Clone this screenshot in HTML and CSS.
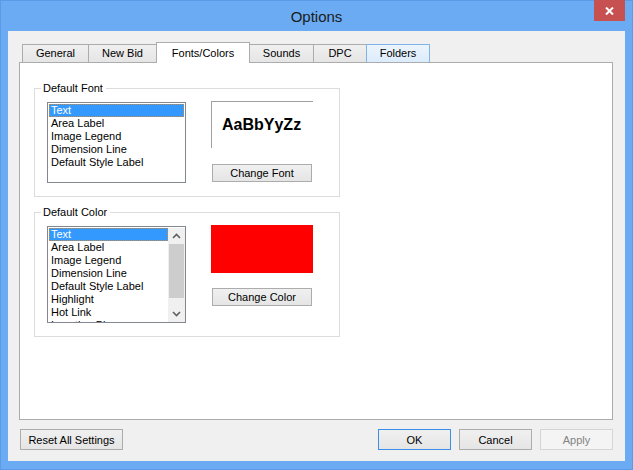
FILE: index.html
```html
<!DOCTYPE html>
<html>
<head>
<meta charset="utf-8">
<title>Options</title>
<link rel="stylesheet" href="styles.css">
</head>
<body>
<div class="window">
  <div class="titlebar">
    <span class="title">Options</span>
    <div class="close">
      <svg width="9" height="8" viewBox="0 0 9 8"><path d="M1 0.5 L8 7.5 M8 0.5 L1 7.5" stroke="#fff" stroke-width="2"/></svg>
    </div>
  </div>
  <div class="client">
    <div class="tabs">
      <div class="tab t-general">General</div>
      <div class="tab t-newbid">New Bid</div>
      <div class="tab t-fonts selected">Fonts/Colors</div>
      <div class="tab t-sounds">Sounds</div>
      <div class="tab t-dpc">DPC</div>
      <div class="tab t-folders hover">Folders</div>
    </div>
    <div class="panel">
      <div class="group group-font">
        <span class="legend">Default Font</span>
        <div class="listbox lb-font">
          <div class="items">
            <div class="item sel">Text</div>
            <div class="item">Area Label</div>
            <div class="item">Image Legend</div>
            <div class="item">Dimension Line</div>
            <div class="item">Default Style Label</div>
          </div>
        </div>
        <div class="side">
          <div class="preview">AaBbYyZz</div>
          <button class="btn side-btn btn-font">Change Font</button>
        </div>
      </div>
      <div class="group group-color">
        <span class="legend">Default Color</span>
        <div class="listbox lb-color">
          <div class="items">
            <div class="item sel">Text</div>
            <div class="item">Area Label</div>
            <div class="item">Image Legend</div>
            <div class="item">Dimension Line</div>
            <div class="item">Default Style Label</div>
            <div class="item">Highlight</div>
            <div class="item">Hot Link</div>
            <div class="item">Location Pin</div>
          </div>
          <div class="scrollbar">
            <div class="arrow">
              <svg width="9" height="6" viewBox="0 0 9 6"><path d="M1 5 L4.5 1.5 L8 5" fill="none" stroke="#606060" stroke-width="1.6"/></svg>
            </div>
            <div class="track"><div class="thumb"></div></div>
            <div class="arrow">
              <svg width="9" height="6" viewBox="0 0 9 6"><path d="M1 1 L4.5 4.5 L8 1" fill="none" stroke="#606060" stroke-width="1.6"/></svg>
            </div>
          </div>
        </div>
        <div class="side">
          <div class="swatch"></div>
          <button class="btn side-btn btn-color">Change Color</button>
        </div>
      </div>
    </div>
    <div class="footer">
      <button class="btn btn-reset">Reset All Settings</button>
      <div class="footer-right">
        <button class="btn btn-dlg btn-default">OK</button>
        <button class="btn btn-dlg">Cancel</button>
        <button class="btn btn-dlg btn-disabled">Apply</button>
      </div>
    </div>
  </div>
</div>
</body>
</html>
```
FILE: styles.css
```css
html, body {
  margin: 0;
  padding: 0;
}
body {
  font-family: "Liberation Sans", Arial, sans-serif;
  font-size: 11px;
  color: #000;
}
.window {
  width: 633px;
  height: 470px;
  box-sizing: border-box;
  background: #6aabf3;
  border: 1px solid #5a9ae6;
  display: flex;
  flex-direction: column;
}
.titlebar {
  height: 30px;
  position: relative;
  display: flex;
  justify-content: center;
  align-items: center;
}
.title {
  font-family: "Liberation Sans", Arial, sans-serif;
  font-size: 15px;
  color: #1b1b1b;
}
.close {
  position: absolute;
  top: -1px;
  right: 7px;
  width: 31px;
  height: 21px;
  background: #c75050;
  display: flex;
  justify-content: center;
  align-items: center;
}
.client {
  margin: 0 7px;
  height: 430px;
  box-sizing: border-box;
  background: #f0f0f0;
  padding: 11px 12px 0 11px;
}
.tabs {
  height: 20px;
  display: flex;
  align-items: flex-end;
  padding-left: 3px;
  position: relative;
  z-index: 1;
}
.tab {
  height: 18px;
  box-sizing: border-box;
  border: 1px solid #acacac;
  border-bottom: none;
  background: linear-gradient(#f0f0f0, #e5e5e5);
  text-align: center;
  line-height: 17px;
  margin-left: -1px;
}
.tab:first-child {
  margin-left: 0;
}
.tab.selected {
  height: 21px;
  margin-bottom: -1px;
  background: #fff;
  position: relative;
  z-index: 2;
  line-height: 20px;
}
.tab.hover {
  background: linear-gradient(#ecf4fc, #dcecfc);
  border-color: #7eb4ea;
  position: relative;
  z-index: 1;
}
.t-general { width: 67px; }
.t-newbid { width: 69px; }
.t-fonts { width: 94px; }
.t-sounds { width: 65px; }
.t-dpc { width: 54px; }
.t-folders { width: 64px; }

.panel {
  height: 358px;
  box-sizing: border-box;
  background: #fff;
  border: 1px solid #acacac;
  padding: 25px 0 0 14px;
}
.group {
  width: 306px;
  box-sizing: border-box;
  border: 1px solid #dcdcdc;
  position: relative;
  display: flex;
  align-items: flex-start;
  gap: 25px;
  padding: 12px 0 0 12px;
}
.group-font {
  height: 109px;
}
.group-color {
  height: 125px;
  margin-top: 15px;
}
.legend {
  position: absolute;
  left: 6px;
  top: -7px;
  background: #fff;
  padding: 0 3px 0 2px;
  line-height: 13px;
  color: #000;
}
.listbox {
  width: 139px;
  box-sizing: border-box;
  border: 1px solid #828790;
  background: #fff;
  padding: 1px;
  display: flex;
  overflow: hidden;
}
.lb-font {
  height: 81px;
  margin-top: 1px;
}
.lb-color {
  height: 97px;
  margin-top: 1px;
  padding-right: 0;
  padding-bottom: 0;
}
.items {
  flex: 1;
  overflow: hidden;
}
.item {
  height: 13px;
  line-height: 13px;
  padding-left: 2px;
  white-space: nowrap;
  box-sizing: border-box;
}
.item.sel {
  background: #3399ff;
  color: #fff;
  border: 1px dotted #d08a3a;
  padding-left: 1px;
  line-height: 11px;
}
.scrollbar {
  width: 17px;
  display: flex;
  flex-direction: column;
  background: #f0f0f0;
}
.arrow {
  height: 16px;
  display: flex;
  justify-content: center;
  align-items: center;
}
.track {
  flex: 1;
  padding: 0 1px 0 1px;
}
.thumb {
  height: 54px;
  background: #cdcdcd;
}
.side {
  width: 102px;
  display: flex;
  flex-direction: column;
}
.preview {
  height: 47px;
  box-sizing: border-box;
  border-top: 1px solid #a0a0a0;
  border-left: 1px solid #a0a0a0;
  font-family: "Liberation Sans", Arial, sans-serif;
  font-weight: bold;
  font-size: 16px;
  line-height: 46px;
  padding-left: 10px;
  color: #000;
}
.swatch {
  height: 48px;
  background: #ff0000;
}
.btn {
  font-family: "Liberation Sans", Arial, sans-serif;
  font-size: 11px;
  color: #000;
  border: 1px solid #acacac;
  background: linear-gradient(#f0f0f0, #e5e5e5);
  box-sizing: border-box;
  padding: 0;
  margin: 0;
  border-radius: 0;
}
.side-btn {
  width: 100px;
  height: 18px;
  margin-left: 1px;
}
.btn-font {
  margin-top: 16px;
}
.btn-color {
  margin-top: 15px;
}
.footer {
  display: flex;
  justify-content: space-between;
  margin-top: 9px;
}
.btn-reset {
  width: 103px;
  height: 21px;
  margin-left: 1px;
}
.footer-right {
  display: flex;
  gap: 8px;
}
.btn-dlg {
  width: 73px;
  height: 21px;
}
.btn-default {
  border-color: #3c8ee8;
}
.btn-disabled {
  border-color: #d5d5d5;
  background: #f4f4f4;
  color: #838383;
}
```
